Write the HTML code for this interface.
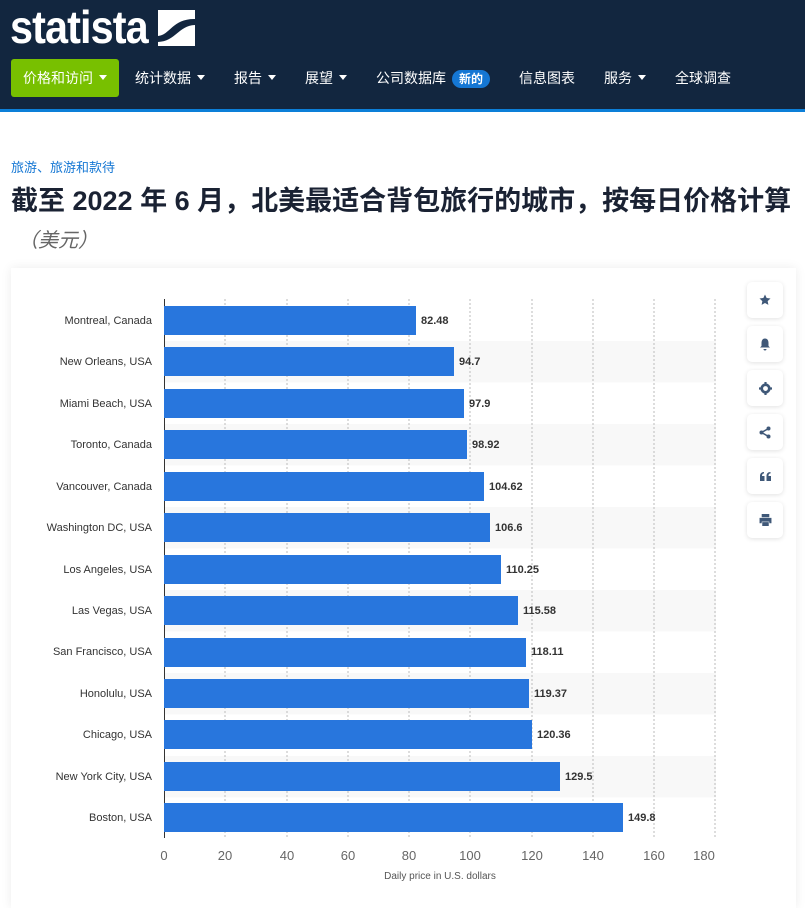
<!DOCTYPE html>
<html><head><meta charset="utf-8"><style>
*{margin:0;padding:0;box-sizing:border-box}
body{width:805px;height:896px;overflow:hidden;background:#fff;font-family:"Liberation Sans","Noto Sans CJK SC",sans-serif;position:relative}
.hdr{position:absolute;left:0;top:0;width:805px;height:109px;background:#12263f}
.blue{position:absolute;left:0;top:109px;width:805px;height:3px;background:#0c7fd8}
.logo{position:absolute;left:10px;top:0px;color:#fff;font-size:46px;font-weight:bold;letter-spacing:-1px;transform:scaleX(0.9);transform-origin:left top}
.nav{position:absolute;top:60px;left:11px;height:36px;display:flex;align-items:center;color:#fff;font-size:14px}
.nav span{margin-right:29px;white-space:nowrap}
.tri{display:inline-block;border:4px solid transparent;border-top:5px solid #fff;margin-left:6px;vertical-align:-1px}
.green{background:#78c000;border-radius:3px;padding:9px 12px;margin-right:16px!important}
.new{background:#1577d4;border-radius:10px;padding:2px 7px;font-weight:bold;font-size:12px;margin-left:6px}
.cat{position:absolute;left:11px;top:157px;color:#1577d4;font-size:13px}
h1{position:absolute;left:11px;top:179px;font-size:27px;color:#1a2233;font-weight:bold;white-space:nowrap}
.unit{position:absolute;left:18px;top:224px;font-size:20px;color:#666;font-style:italic}
.card{position:absolute;left:11px;top:268px;width:785px;height:640px;background:#fff;box-shadow:0 0 10px rgba(0,0,0,.08)}
.btn{position:absolute;left:747px;width:36px;height:36px;background:#fff;border-radius:5px;box-shadow:0 1px 5px rgba(0,0,0,.12);display:flex;align-items:center;justify-content:center}
</style></head><body>
<div class="hdr"></div><div class="blue"></div>
<div class="logo">statista</div>
<svg style="position:absolute;left:158px;top:10px" width="37" height="36" viewBox="0 0 37 36"><rect width="37" height="36" fill="#fff"/><path d="M-1 26 C12 26 14 8 38 9 L38 15 C20 15 18 32 -1 32Z" fill="#12263f"/></svg>
<div class="nav"><span class="green">价格和访问<i class="tri"></i></span><span>统计数据<i class="tri"></i></span><span>报告<i class="tri"></i></span><span>展望<i class="tri"></i></span><span>公司数据库<b class="new">新的</b></span><span>信息图表</span><span>服务<i class="tri"></i></span><span>全球调查</span></div>
<div class="cat">旅游、旅游和款待</div>
<h1>截至 2022 年 6 月，北美最适合背包旅行的城市，按每日价格计算</h1>
<div class="unit">（美元）</div>
<div class="card"></div>
<svg style="position:absolute;left:0;top:0" width="805" height="896" font-family="Liberation Sans,sans-serif">
<g fill="#f8f8f8">
<rect x="164" y="341" width="552" height="41.5"/><rect x="164" y="424" width="552" height="41.5"/><rect x="164" y="507" width="552" height="41.5"/><rect x="164" y="590" width="552" height="41.5"/><rect x="164" y="673" width="552" height="41.5"/><rect x="164" y="756" width="552" height="41.5"/>
</g>
<g stroke="#bbb" stroke-dasharray="2,2">
<line x1="225" y1="299" x2="225" y2="838"/><line x1="287" y1="299" x2="287" y2="838"/><line x1="348" y1="299" x2="348" y2="838"/><line x1="409" y1="299" x2="409" y2="838"/><line x1="470" y1="299" x2="470" y2="838"/><line x1="532" y1="299" x2="532" y2="838"/><line x1="593" y1="299" x2="593" y2="838"/><line x1="654" y1="299" x2="654" y2="838"/><line x1="715" y1="299" x2="715" y2="838"/>
</g>
<line x1="164.5" y1="299" x2="164.5" y2="838" stroke="#333"/>
<g fill="#2876dd">
<rect x="164" y="306" width="252" height="29"/><rect x="164" y="347" width="290" height="29"/><rect x="164" y="389" width="300" height="29"/><rect x="164" y="430" width="303" height="29"/><rect x="164" y="472" width="320" height="29"/><rect x="164" y="513" width="326" height="29"/><rect x="164" y="555" width="337" height="29"/><rect x="164" y="596" width="354" height="29"/><rect x="164" y="638" width="362" height="29"/><rect x="164" y="679" width="365" height="29"/><rect x="164" y="720" width="368" height="29"/><rect x="164" y="762" width="396" height="29"/><rect x="164" y="803" width="459" height="29"/>
</g>
<g font-size="11" fill="#333" text-anchor="end">
<text x="152" y="324">Montreal, Canada</text><text x="152" y="365">New Orleans, USA</text><text x="152" y="407">Miami Beach, USA</text><text x="152" y="448">Toronto, Canada</text><text x="152" y="490">Vancouver, Canada</text><text x="152" y="531">Washington DC, USA</text><text x="152" y="573">Los Angeles, USA</text><text x="152" y="614">Las Vegas, USA</text><text x="152" y="655">San Francisco, USA</text><text x="152" y="697">Honolulu, USA</text><text x="152" y="738">Chicago, USA</text><text x="152" y="780">New York City, USA</text><text x="152" y="821">Boston, USA</text>
</g>
<g font-size="11" fill="#333" font-weight="bold">
<text x="421" y="324">82.48</text><text x="459" y="365">94.7</text><text x="469" y="407">97.9</text><text x="472" y="448">98.92</text><text x="489" y="490">104.62</text><text x="495" y="531">106.6</text><text x="506" y="573">110.25</text><text x="523" y="614">115.58</text><text x="531" y="655">118.11</text><text x="534" y="697">119.37</text><text x="537" y="738">120.36</text><text x="565" y="780">129.5</text><text x="628" y="821">149.8</text>
</g>
<g font-size="13" fill="#666" text-anchor="middle">
<text x="164" y="860">0</text><text x="225" y="860">20</text><text x="287" y="860">40</text><text x="348" y="860">60</text><text x="409" y="860">80</text><text x="470" y="860">100</text><text x="532" y="860">120</text><text x="593" y="860">140</text><text x="654" y="860">160</text><text x="704" y="860">180</text>
</g>
<text x="440" y="879" font-size="10" fill="#555" text-anchor="middle">Daily price in U.S. dollars</text>
</svg>
<div class="btn" style="top:282px"><svg width="12" height="12" viewBox="0 0 24 24"><path d="M12 1l3.3 7 7.7.9-5.7 5.3 1.5 7.6L12 18l-6.8 3.8 1.5-7.6L1 8.9 8.7 8z" fill="#3f5878"/></svg></div>
<div class="btn" style="top:326px"><svg width="12" height="13" viewBox="0 0 24 26"><path d="M12 1c5 0 7 4 7 9v6l3 3H2l3-3v-6c0-5 2-9 7-9zM9 22h6a3 3 0 0 1-6 0z" fill="#3f5878"/></svg></div>
<div class="btn" style="top:370px"><svg width="13" height="13" viewBox="0 0 24 24"><circle cx="12" cy="12" r="7" fill="none" stroke="#3f5878" stroke-width="5"/><path d="M10 0h4v4h-4zM10 20h4v4h-4zM0 10h4v4H0zM20 10h4v4h-4z" fill="#3f5878"/></svg></div>
<div class="btn" style="top:414px"><svg width="12" height="13" viewBox="0 0 24 24"><circle cx="19" cy="4" r="4" fill="#3f5878"/><circle cx="19" cy="20" r="4" fill="#3f5878"/><circle cx="5" cy="12" r="4" fill="#3f5878"/><path d="M19 4L5 12l14 8" stroke="#3f5878" stroke-width="3" fill="none"/></svg></div>
<div class="btn" style="top:458px"><svg width="11" height="9" viewBox="0 0 22 18"><path d="M0 8c0-5 3-8 8-8v3c-3 0-4 2-4 5h5v10H0zM13 8c0-5 3-8 8-8v3c-3 0-4 2-4 5h5v10h-9z" fill="#3f5878"/></svg></div>
<div class="btn" style="top:502px"><svg width="13" height="12" viewBox="0 0 24 22"><path d="M5 0h14v6H5zM1 7h22v10h-4v-3H5v3H1zM6 15h12v7H6z" fill="#3f5878"/></svg></div>
</body></html>
